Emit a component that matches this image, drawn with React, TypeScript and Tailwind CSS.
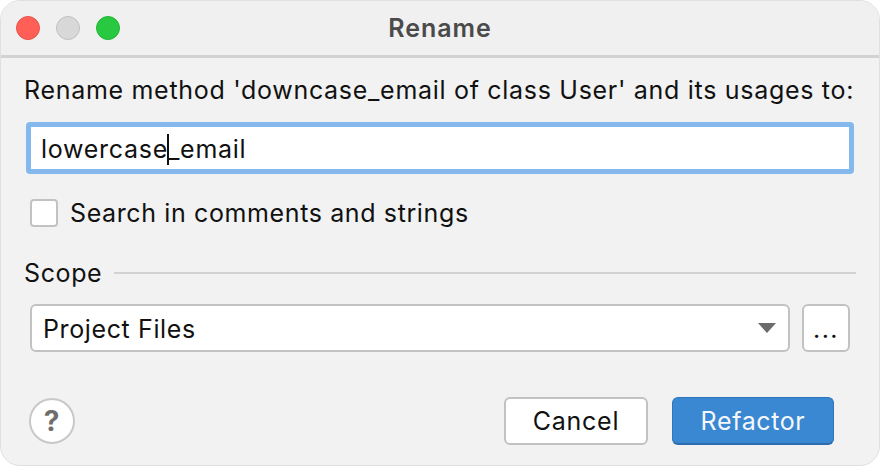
export default function App() {
  return (
    <div className="w-[880px] h-[466px] bg-white font-['Inter','Liberation_Sans',sans-serif] text-[25px] leading-[30px] tracking-[0.62px] text-[#111]">
      <div className="w-[880px] h-[466px] bg-[#f2f2f2] rounded-[20px] border border-[#e0e0e0] overflow-hidden flex flex-col">
        {/* title bar */}
        <div className="relative h-[57px] shrink-0 bg-[#f0f0f0] border-b-[3px] border-[#d2d2d2] flex items-center pl-[15px] gap-[16px]">
          <div className="w-[24px] h-[24px] rounded-full bg-[#ff5f57] border border-[#e5534c]" />
          <div className="w-[24px] h-[24px] rounded-full bg-[#d8d8d8] border border-[#c0c0c0]" />
          <div className="w-[24px] h-[24px] rounded-full bg-[#28c840] border border-[#24b53a]" />
          <div className="absolute inset-x-0 top-0 h-[54px] flex items-center justify-center text-[25px] font-semibold tracking-[1px] text-[#4a4a4a]">
            Rename
          </div>
        </div>

        <div className="flex-1 flex flex-col pl-[23px] pr-[23px]">
          <div className="mt-[17px] tracking-[0.7px] whitespace-nowrap">
            Rename method 'downcase_email of class User' and its usages to:
          </div>

          <div className="mt-[17px] ml-[2px] w-[828px] h-[52px] bg-white border-[5px] border-[#85b9ee] rounded-[4px] flex items-center pl-[10px] pt-[2px] tracking-[0.72px]">
            <span>lowercase</span>
            <span className="w-[2px] h-[31px] bg-[#111] -mx-[1px]" />
            <span>_email</span>
          </div>

          <div className="mt-[24px] ml-[6px] flex items-center gap-[12px]">
            <div className="w-[28px] h-[28px] bg-white border-2 border-[#c2c2c2] rounded-[4px]" />
            <span>Search in comments and strings</span>
          </div>

          <div className="mt-[30px] flex items-center gap-[12px]">
            <span>Scope</span>
            <div className="flex-1 h-[2px] bg-[#d2d2d2]" />
          </div>

          <div className="mt-[16px] ml-[6px] flex gap-[12px]">
            <div className="w-[760px] h-[48px] bg-white border-2 border-[#c2c2c2] rounded-[6px] flex items-center justify-between pl-[11px] pr-[12px]">
              <span className="relative top-[1px]">Project Files</span>
              <svg width="18" height="10" viewBox="0 0 18 10"><path d="M0 0h18L9 10z" fill="#6b6b6b" /></svg>
            </div>
            <div className="w-[48px] h-[48px] bg-white border-2 border-[#c2c2c2] rounded-[6px] flex items-center justify-center">
              <span className="relative top-[1px] tracking-[1.5px]">...</span>
            </div>
          </div>

          <div className="mt-[45px] flex items-center">
            <div className="ml-[5px] w-[46px] h-[46px] rounded-full bg-white border-2 border-[#c8c8c8] flex items-center justify-center text-[28px] font-bold text-[#6e6e6e]">
              ?
            </div>
            <div className="ml-auto mr-[22px] flex gap-[24px]">
              <div className="w-[144px] h-[48px] bg-white border-2 border-[#c2c2c2] rounded-[6px] flex items-center justify-center tracking-[0.75px]">
                Cancel
              </div>
              <div className="w-[162px] h-[48px] bg-[#3a87d2] border border-[#2f76bd] border-b-2 border-b-[#2a6cae] rounded-[6px] flex items-center justify-center text-[#f4f8fc]">
                Refactor
              </div>
            </div>
          </div>
        </div>
      </div>
    </div>
  );
}
